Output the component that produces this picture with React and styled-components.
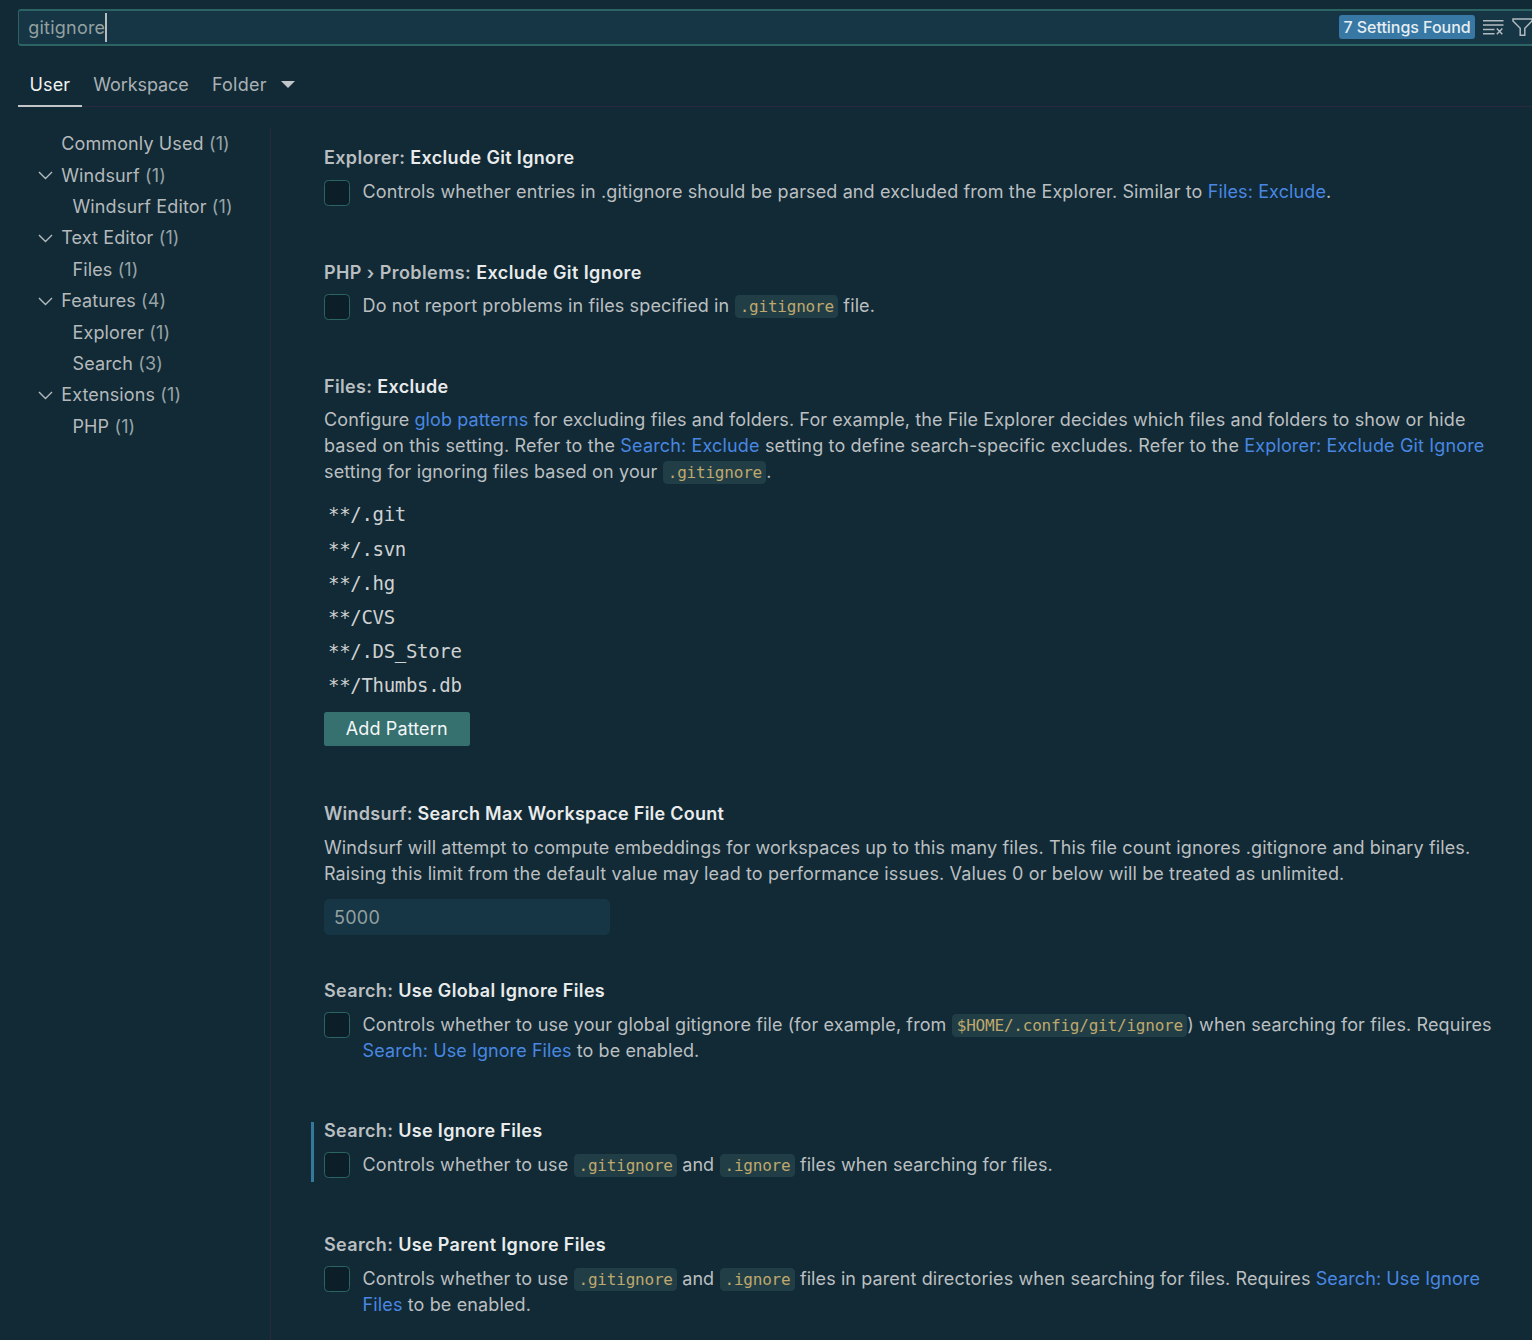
import React from "react";
import styled, { createGlobalStyle, css } from "styled-components";

const c = {
  bg: "#112a35",
  input: "#163545",
  inputText: "#93a1a1",
  teal: "#2b6463",
  text: "#bbbfc1",
  bright: "#e9ebec",
  link: "#4987e2",
  code: "#bfa86c",
  chip: "#213e47",
  rule: "#2b2941",
};

const Global = createGlobalStyle`
  html, body { margin: 0; background: ${c.bg}; }
  body { overflow: hidden; }
  * { box-sizing: border-box; }
`;

const Page = styled.div`
  display: flex;
  flex-direction: column;
  width: 1532px;
  height: 1340px;
  overflow: hidden;
  background: ${c.bg};
  color: ${c.text};
  font-family: Inter, "Liberation Sans", sans-serif;
  font-size: 18px;
  line-height: 25.9px;
  letter-spacing: 0.125px;
`;

const SearchBar = styled.div`
  display: flex;
  align-items: center;
  flex: none;
  height: 37px;
  margin: 9.4px -20px 0 18px;
  padding: 0 17px 0 9.3px;
  border: 2px solid ${c.teal};
  border-left-width: 1.5px;
  border-radius: 3px;
  background: ${c.input};
  color: ${c.inputText};
  letter-spacing: 0.21px;
`;

const Caret = styled.span`
  width: 1.5px;
  height: 29px;
  background: #b4bcbe;
`;

const Badge = styled.span`
  margin-left: auto;
  margin-right: 8px;
  width: 136px;
  height: 24px;
  margin-top: -1px;
  border-radius: 3px;
  background: #3878a4;
  color: #e6eef2;
  font-size: 16px;
  font-weight: 500;
  line-height: 24px;
  letter-spacing: -0.03px;
  text-align: center;
  white-space: nowrap;
`;

const Icon = styled.svg`
  flex: none;
  display: block;
  fill: none;
  stroke: #b2bbbf;
  stroke-width: 1.5;
  margin-left: ${(p) => p.$gap || 0}px;
`;

const Tabs = styled.nav`
  display: flex;
  flex: none;
  height: 60.6px;
  margin-left: 18px;
  border-bottom: 1px solid ${c.rule};
`;

const Tab = styled.div`
  display: flex;
  align-items: center;
  height: 60.6px;
  padding: 16px 11.6px 0;
  color: ${(p) => (p.$active ? "#f0f1f2" : "#abb1b5")};
  letter-spacing: ${(p) => p.$spacing || 0.08}px;
  ${(p) => p.$active && css`border-bottom: 2px solid #c3c6c8; padding-top: 18px;`}
`;

const Triangle = styled.span`
  margin-left: 14px;
  border: 7px solid transparent;
  border-top-color: #c3c6c8;
  border-bottom-width: 0;
`;

const Body = styled.div`
  display: flex;
  flex: 1;
  min-height: 0;
  padding-top: 21px;
`;

const Tree = styled.aside`
  flex: none;
  width: 271px;
  border-right: 1px solid ${c.rule};
`;

const TreeRow = styled.div`
  display: flex;
  align-items: center;
  height: 31.4px;
  padding-left: ${(p) => (p.$child ? 72.5 : p.$open ? 37.5 : 61.2)}px;
  color: #b4b9bc;
  white-space: pre;
  position: relative;
  top: 0.5px;
`;

const Count = styled.span`
  color: #98a3a7;
`;

const Twisty = styled(Icon)`
  margin-right: 8.7px;
  stroke-width: 1.4;
`;

const Settings = styled.main`
  flex: 1;
  padding: 17.5px 0 0 53px;
`;

const Item = styled.section`
  position: relative;
  margin-bottom: ${(p) => p.$after || 53.9}px;
  white-space: nowrap;
  ${(p) => p.$modified && css`
    &::before {
      content: "";
      position: absolute;
      left: -13px;
      top: 4px;
      width: 2.5px;
      height: 60px;
      background: #34789c;
    }
  `}
`;

const Title = styled.h3`
  margin: 0 0 7.9px;
  color: #b9bec1;
  font-size: 18px;
  font-weight: 600;
  line-height: 25.9px;
  letter-spacing: ${(p) => p.$spacing || 0.34}px;
`;

const Key = styled.span`
  color: ${c.bright};
`;

const CheckRow = styled.div`
  display: flex;
  align-items: flex-start;
`;

const Checkbox = styled.span`
  flex: none;
  width: 26px;
  height: 26px;
  margin: 0.4px 12.6px 0 0;
  border: 1.4px solid ${c.teal};
  border-radius: 4.3px;
  background: #0c1f29;
`;

const Text = styled.div``;

const Line = styled.span`
  letter-spacing: ${(p) => p.$spacing}px;
`;

const Link = styled.a`
  color: ${c.link};
`;

const Chip = styled.code`
  padding: 2.1px 4.3px;
  margin-left: 0.8px;
  border-radius: 4.3px;
  background: ${c.chip};
  color: ${c.code};
  font-family: "DejaVu Sans Mono", monospace;
  font-size: 16px;
  line-height: 1;
  letter-spacing: -0.21px;
`;

const Patterns = styled.ul`
  list-style: none;
  margin: 12.3px 0 9.2px;
  padding: 0 0 0 4px;
  color: #cfd1d2;
  font-family: "DejaVu Sans Mono", monospace;
  font-size: 19px;
  line-height: 34.2px;
  letter-spacing: -0.31px;
`;

const Button = styled.button`
  display: block;
  width: 145.5px;
  height: 34px;
  padding: 0;
  border: 0;
  border-radius: 2.5px;
  background: #36706f;
  color: #f4f7f7;
  font: inherit;
  letter-spacing: 0.13px;
`;

const NumberBox = styled.div`
  width: 285.5px;
  height: 36px;
  margin-top: 12px;
  padding-left: 10px;
  border-radius: 5px;
  background: ${c.input};
  color: ${c.inputText};
  line-height: 37px;
  letter-spacing: 0.25px;
`;

const tree = [
  ["Commonly Used", 1, false, false],
  ["Windsurf", 1, true, false],
  ["Windsurf Editor", 1, false, true],
  ["Text Editor", 1, true, false],
  ["Files", 1, false, true],
  ["Features", 4, true, false],
  ["Explorer", 1, false, true],
  ["Search", 3, false, true],
  ["Extensions", 1, true, false],
  ["PHP", 1, false, true],
];

const patterns = ["**/.git", "**/.svn", "**/.hg", "**/CVS", "**/.DS_Store", "**/Thumbs.db"];

const Setting = ({ group, name, spacing, children, ...rest }) => (
  <Item {...rest}>
    <Title $spacing={spacing}>
      {group}: <Key>{name}</Key>
    </Title>
    {children}
  </Item>
);

const Check = ({ children }) => (
  <CheckRow>
    <Checkbox role="checkbox" aria-checked="false" />
    <Text>{children}</Text>
  </CheckRow>
);

export default function App() {
  return (
    <Page>
      <Global />
      <SearchBar>
        gitignore
        <Caret />
        <Badge>7 Settings Found</Badge>
        <Icon width="21" height="17" viewBox="0 0 21 17">
          <path d="M0 1.8H20.5M0 6.1H20.5M0 10.4H11.5M0 14.7H11.5M13.8 9.4L19.3 15.2M19.3 9.4L13.8 15.2" />
        </Icon>
        <Icon $gap={8} width="21" height="19" viewBox="0 0 21 19">
          <path d="M1 1H20V3L12.8 10.2V17.3H8.2V10.2L1 3Z" />
        </Icon>
      </SearchBar>
      <Tabs>
        <Tab $active>User</Tab>
        <Tab $spacing={-0.08}>Workspace</Tab>
        <Tab $spacing={0.25}>
          Folder
          <Triangle />
        </Tab>
      </Tabs>
      <Body>
        <Tree>
          {tree.map(([label, count, open, child]) => (
            <TreeRow key={label} $open={open} $child={child}>
              {open && (
                <Twisty width="15" height="9" viewBox="0 0 15 9">
                  <path d="M1 1L7.5 7.6L14 1" />
                </Twisty>
              )}
              {label} <Count>({count})</Count>
            </TreeRow>
          ))}
        </Tree>
        <Settings>
          <Setting group="Explorer" name="Exclude Git Ignore">
            <Check>
              Controls whether entries in .gitignore should be parsed and excluded from the Explorer. Similar to{" "}
              <Link>Files: Exclude</Link>.
            </Check>
          </Setting>
          <Setting group="PHP › Problems" name="Exclude Git Ignore" spacing={0.42}>
            <Check>
              Do not report problems in files specified in <Chip>.gitignore</Chip> file.
            </Check>
          </Setting>
          <Setting group="Files" name="Exclude" $after={55.4}>
            <Text>
              <Line $spacing={0.11}>
                Configure <Link>glob patterns</Link> for excluding files and folders. For example, the File Explorer
                decides which files and folders to show or hide
              </Line>
              <br />
              <Line $spacing={0.152}>
                based on this setting. Refer to the <Link>Search: Exclude</Link> setting to define search-specific
                excludes. Refer to the <Link>Explorer: Exclude Git Ignore</Link>
              </Line>
              <br />
              setting for ignoring files based on your <Chip>.gitignore</Chip>.
            </Text>
            <Patterns>
              {patterns.map((p) => (
                <li key={p}>{p}</li>
              ))}
            </Patterns>
            <Button>Add Pattern</Button>
          </Setting>
          <Setting group="Windsurf" name="Search Max Workspace File Count" spacing={0.26} $after={43.2}>
            <Text>
              Windsurf will attempt to compute embeddings for workspaces up to this many files. This file count ignores
              .gitignore and binary files.
              <br />
              Raising this limit from the default value may lead to performance issues. Values 0 or below will be
              treated as unlimited.
            </Text>
            <NumberBox>5000</NumberBox>
          </Setting>
          <Setting group="Search" name="Use Global Ignore Files" $after={54.3}>
            <Check>
              <Line $spacing={0.105}>
                Controls whether to use your global gitignore file (for example, from{" "}
                <Chip>$HOME/.config/git/ignore</Chip>) when searching for files. Requires
              </Line>
              <br />
              <Line $spacing={0.08}>
                <Link>Search: Use Ignore Files</Link> to be enabled.
              </Line>
            </Check>
          </Setting>
          <Setting group="Search" name="Use Ignore Files" $modified>
            <Check>
              <Line $spacing={0.09}>
                Controls whether to use <Chip>.gitignore</Chip> and <Chip>.ignore</Chip> files when searching for
                files.
              </Line>
            </Check>
          </Setting>
          <Setting group="Search" name="Use Parent Ignore Files">
            <Check>
              <Line $spacing={0.09}>
                Controls whether to use <Chip>.gitignore</Chip> and <Chip>.ignore</Chip> files in parent directories
                when searching for files. Requires <Link>Search: Use Ignore</Link>
              </Line>
              <br />
              <Link>Files</Link> to be enabled.
            </Check>
          </Setting>
        </Settings>
      </Body>
    </Page>
  );
}
